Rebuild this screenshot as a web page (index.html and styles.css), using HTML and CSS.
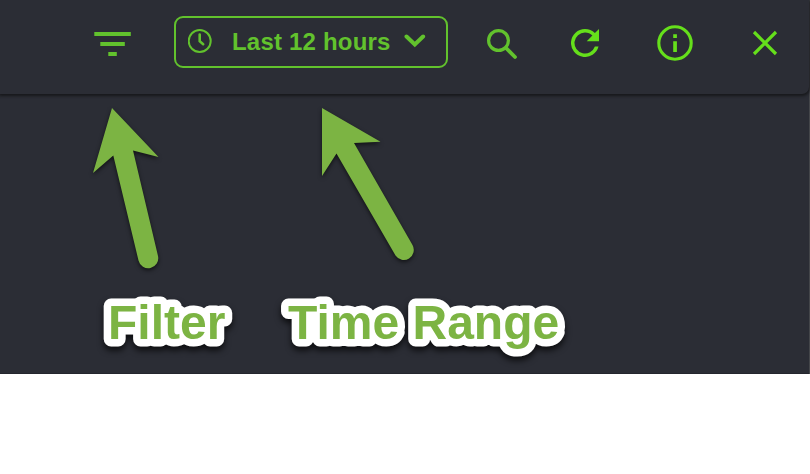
FILE: index.html
```html
<!DOCTYPE html>
<html lang="en">
<head>
<meta charset="utf-8">
<title>Toolbar</title>
<link rel="stylesheet" href="styles.css">
</head>
<body>
<main class="panel">
  <header class="toolbar">
    <svg class="filter" width="38" height="26" viewBox="0 0 38 26"><path d="M.3 0h36.500v4H.3zM6.300 10h24.500v4H6.300zM14.300 20h8.500v4h-8.500z" fill="currentColor"/></svg>
    <button class="range">
      <svg class="clock" width="24" height="24" viewBox="0 0 24 24"><circle cx="11.700" cy="12" r="11"/><path d="M11.700 5.500v6.700l3.500 3" stroke-width="2.600"/></svg>
      <span class="range-text">Last 12 hours</span>
      <svg class="chevron" width="22" height="14" viewBox="0 0 22 14"><path d="M2.500 2.500l8.300 8 8.300-8"/></svg>
    </button>
    <svg class="search" width="32" height="32" viewBox="0 0 32 32"><circle cx="11.500" cy="12.500" r="9.900"/><path d="M19 20l9 9" stroke-width="3.800"/></svg>
    <svg class="refresh" width="28" height="28" viewBox="0 0 16 16"><path d="M13.650 2.350A7.960 7.960 0 0 0 8 0a8 8 0 1 0 7.730 10h-2.080A6 6 0 1 1 8 2c1.660 0 3.140.69 4.220 1.780L9 7h7V0z" fill="currentColor"/></svg>
    <svg class="info" width="36" height="36" viewBox="0 0 36 36"><circle cx="18" cy="18" r="16.200"/><path d="M16.200 9.200h3.700v3.700h-3.700zM16.200 16.200h3.700v10.800h-3.700z" fill="currentColor" stroke="none"/></svg>
    <svg class="close" width="26" height="26" viewBox="0 0 26 26"><path d="M2 2l22 22M24 2L2 24"/></svg>
  </header>
  <section class="content"></section>
  <svg class="notes" width="810" height="374" viewBox="0 0 810 374">
    <g class="arrows">
      <path d="M112 108L158.500 157 133 150.500 158 256A10 10 0 0 1 138.500 260.500L113.300 155.500 93 173z"/>
      <path d="M322 108L380.500 141.800 354 143 412.500 245A10 10 0 0 1 395.500 255.500L336.500 153.500 322 176z"/>
    </g>
    <g class="labels">
      <text x="108" y="339">Filter</text>
      <text x="288" y="339">Time Range</text>
    </g>
  </svg>
</main>
</body>
</html>
```
FILE: styles.css
```css
body {
  margin: 0;
  background: #fff;
  font-family: "Liberation Sans", Arial, sans-serif;
}
.panel {
  position: relative;
  height: 374px;
  background: #2b2d35;
  box-shadow: inset -1px 0 #44464a, inset 0 -1px #24262d;
  overflow: hidden;
}
.toolbar {
  display: flex;
  align-items: flex-start;
  box-sizing: border-box;
  height: 94px;
  margin-right: 1px;
  padding-left: 94px;
  border-bottom-right-radius: 7px;
  box-shadow: 0 1px 3px 0.5px #17181b;
  background: #2b2d35;
  color: #62c22d;
}
.toolbar svg {
  flex: none;
  fill: none;
  stroke: currentColor;
}
.toolbar .filter { margin-top: 32px; stroke: none; }
.range {
  display: flex;
  flex: none;
  align-items: center;
  box-sizing: border-box;
  width: 274px;
  height: 52px;
  margin: 16px 0 0 42px;
  padding: 0 0 2px 12px;
  border: 2px solid #62c22d;
  border-radius: 9px;
  background: transparent;
  color: inherit;
  font: bold 24px/28px "Liberation Sans", Arial, sans-serif;
}
.clock { stroke-width: 2; stroke-linecap: round; }
.range-text {
  width: 159px;
  margin: 2px 0 0 20px;
  letter-spacing: 0.2px;
  text-align: left;
  white-space: nowrap;
}
.chevron { margin-left: 13px; stroke-width: 4; stroke-linecap: round; }
.toolbar .search { margin: 28px 0 0 39px; stroke-width: 3.2; stroke-linecap: round; }
.toolbar .refresh { margin: 29px 0 0 52px; stroke: none; color: #65df1b; }
.info { margin: 25px 0 0 58px; stroke-width: 3.1; color: #65df1b; }
.close { margin: 30px 0 0 59px; stroke-width: 3.2; color: #65df1b; }
.content { height: 280px; }
.notes {
  position: absolute;
  top: 0;
  left: 0;
  fill: #7cb443;
}
.arrows { filter: drop-shadow(0 2px 2px rgba(0, 0, 0, 0.6)); }
.labels {
  font-size: 48px;
  font-weight: bold;
  stroke: #fff;
  stroke-width: 15px;
  stroke-linejoin: round;
  paint-order: stroke;
  filter: drop-shadow(0 4px 3px rgba(0, 0, 0, 0.7));
}
```
